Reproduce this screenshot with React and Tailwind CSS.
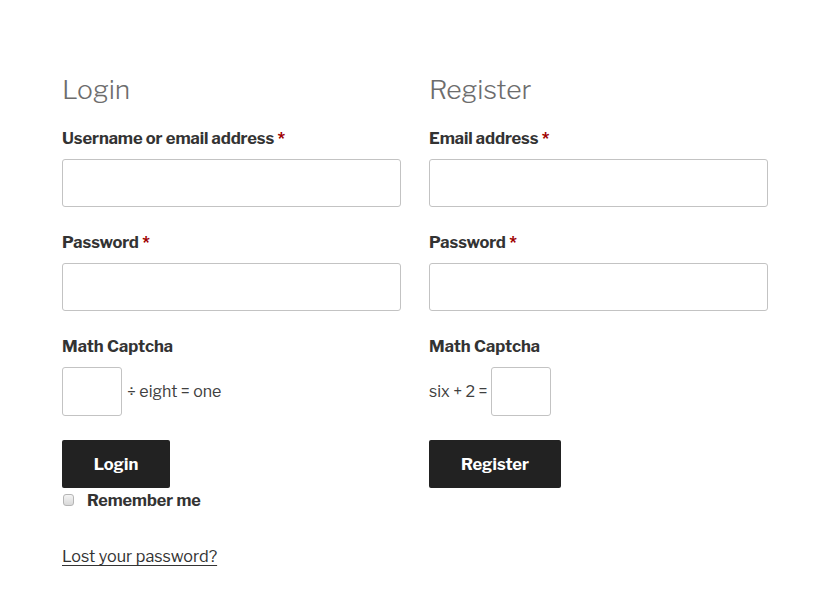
import React from 'react';

const font = { fontFamily: '"Libre Franklin", "Open Sans", "Liberation Sans", sans-serif' };

function Field({ label, type = "text" }) {
    return (
        <div className="flex flex-col">
            <label className="h-[24px] leading-[24px] text-[16.5px] font-bold text-[#333333] tracking-[-0.1px]">
                {label} <span className="text-[#a00000]">*</span>
            </label>
            <input
                type={type}
                className="mt-[9px] h-[48px] w-full rounded-[3px] border border-[#c3c3c3] bg-white px-3 outline-none"
            />
        </div>
    );
}

export default function App() {
    return (
        <div style={font} className="min-h-[593px] w-[832px] bg-white pt-[72px] pl-[62px]">
            <div className="flex gap-[28px]">
                <div className="w-[339px] flex flex-col">
                    <h2 className="h-[34px] leading-[36px] text-[26.5px] font-light text-[#6d6d6d]">Login</h2>
                    <div className="mt-[20px] flex flex-col gap-[23px]">
                        <Field label="Username or email address" />
                        <Field label="Password" type="password" />
                        <div className="flex flex-col">
                            <div className="h-[24px] leading-[24px] text-[16.5px] font-bold text-[#333333]">Math Captcha</div>
                            <div className="mt-[9px] flex items-center gap-[5px]">
                                <input className="h-[49px] w-[60px] rounded-[3px] border border-[#c3c3c3] bg-white outline-none" />
                                <span className="text-[16px] text-[#404040]">÷ eight = one</span>
                            </div>
                        </div>
                    </div>
                    <button className="mt-[24px] h-[48px] w-[108px] rounded-[2px] bg-[#222222] text-[16.5px] leading-[46px] font-bold text-white">
                        Login
                    </button>
                    <label className="mt-[1px] flex items-center h-[22px]">
                        <input
                            type="checkbox"
                            className="ml-[1px] h-[12px] w-[11px] appearance-none rounded-[3px] border border-[#b5b5b5] bg-gradient-to-b from-[#f4f4f4] to-[#d9d9d9]"
                        />
                        <span className="ml-[13px] text-[16.2px] font-bold text-[#333333]">Remember me</span>
                    </label>
                    <a href="#" className="mt-[33px] text-[16.2px] text-[#333333] underline underline-offset-[3px] w-fit">
                        Lost your password?
                    </a>
                </div>
                <div className="w-[339px] flex flex-col">
                    <h2 className="h-[34px] leading-[36px] text-[26.5px] font-light text-[#6d6d6d]">Register</h2>
                    <div className="mt-[20px] flex flex-col gap-[23px]">
                        <Field label="Email address" type="email" />
                        <Field label="Password" type="password" />
                        <div className="flex flex-col">
                            <div className="h-[24px] leading-[24px] text-[16.5px] font-bold text-[#333333]">Math Captcha</div>
                            <div className="mt-[9px] flex items-center gap-[4px]">
                                <span className="text-[16px] text-[#404040]">six + 2 =</span>
                                <input className="h-[49px] w-[60px] rounded-[3px] border border-[#c3c3c3] bg-white outline-none" />
                            </div>
                        </div>
                    </div>
                    <button className="mt-[24px] h-[48px] w-[132px] rounded-[2px] bg-[#222222] text-[16.5px] leading-[46px] font-bold text-white">
                        Register
                    </button>
                </div>
            </div>
        </div>
    );
}
